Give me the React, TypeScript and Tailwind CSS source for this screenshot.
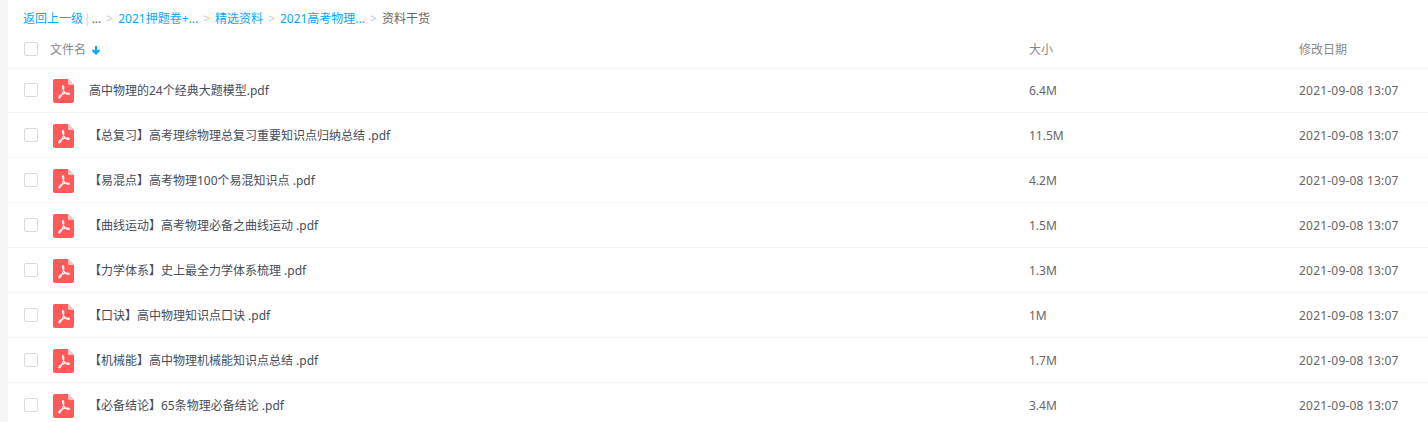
import React from 'react';

const files = [
  { name: '高中物理的24个经典大题模型.pdf', size: '6.4M' },
  { name: '【总复习】高考理综物理总复习重要知识点归纳总结 .pdf', size: '11.5M' },
  { name: '【易混点】高考物理100个易混知识点 .pdf', size: '4.2M' },
  { name: '【曲线运动】高考物理必备之曲线运动 .pdf', size: '1.5M' },
  { name: '【力学体系】史上最全力学体系梳理 .pdf', size: '1.3M' },
  { name: '【口诀】高中物理知识点口诀 .pdf', size: '1M' },
  { name: '【机械能】高中物理机械能知识点总结 .pdf', size: '1.7M' },
  { name: '【必备结论】65条物理必备结论 .pdf', size: '3.4M' },
];

const PdfIcon = () => (
  <svg width="21" height="24" viewBox="0 0 21 24" className="shrink-0">
    <path d="M2 0H15L21 6V22a2 2 0 0 1-2 2H2a2 2 0 0 1-2-2V2a2 2 0 0 1 2-2z" fill="#ff5a5a" />
    <path d="M15 0L21 6H16.5A1.5 1.5 0 0 1 15 4.500z" fill="#ffc4c4" />
    <path
      d="M10 6.500c-.8 0-.6 2 .2 4 .8 2 2 3.600 3.200 4.300 1.200.7 3 .8 3-.1 0-.8-2-.9-4.200-.5-2.200.4-4.500 1.300-5.600 2.700-.8 1-1 2-.4 2 .8 0 2.300-2.300 3.300-4.500 1-2.300 1.500-4.500 1.300-6.200-.1-1-.4-1.700-.8-1.700z"
      fill="none"
      stroke="#ffffff"
      strokeWidth="1.100"
    />
  </svg>
);

const Checkbox = () => (
  <span className="block h-[14px] w-[14px] rounded-[2px] border border-[#d5dae3] bg-white" />
);

const Sep = () => <span className="mx-[5px] text-[#c0c9d6]">&gt;</span>;

export default function App() {
  return (
    <div className="h-[422px] w-[1428px] overflow-hidden bg-[#f7f7f7] pl-2 font-['Noto_Sans','Noto_Sans_CJK_SC',sans-serif] text-xs">
      <div className="h-full bg-white">
        <div className="flex h-[37px] items-center pl-[15px] text-[#06a7ff]">
          <span>返回上一级</span>
          <span className="mx-[1px] text-[#c4d8e8]">|</span>
          <span className="text-[#666]">...</span>
          <Sep />
          <span>2021押题卷+...</span>
          <Sep />
          <span>精选资料</span>
          <Sep />
          <span>2021高考物理...</span>
          <Sep />
          <span className="text-[#666]">资料干货</span>
        </div>
        <div className="flex h-[32px] items-start border-b border-[#f1f5fa] pt-[5px] text-[#888]">
          <div className="w-[42px] pl-4">
            <Checkbox />
          </div>
          <div className="flex w-[979px] items-center gap-[5px]">
            文件名
            <svg width="10" height="10" viewBox="0 0 10 10">
              <path d="M5 1v7M1.500 5l3.500 3.500L8.500 5" fill="none" stroke="#06a7ff" strokeWidth="2.200" />
            </svg>
          </div>
          <div className="w-[270px]">大小</div>
          <div>修改日期</div>
        </div>
        {files.map((f, i) => (
          <div
            key={f.name}
            className={
              i === 0
                ? 'flex h-[44px] items-center border-b border-[#f1f5fa] pt-[1px] text-[#454d5a]'
                : 'flex h-[45px] items-center border-b border-[#f1f5fa] pt-[2px] text-[#454d5a]'
            }
          >
            <div className="w-[45px] pb-[2px] pl-4">
              <Checkbox />
            </div>
            <div className="w-[36px]">
              <PdfIcon />
            </div>
            <div className="w-[940px] whitespace-pre">{f.name}</div>
            <div className="w-[270px] text-[#666]">{f.size}</div>
            <div className="tracking-[0.2px] text-[#666]">2021-09-08 13:07</div>
          </div>
        ))}
      </div>
    </div>
  );
}
